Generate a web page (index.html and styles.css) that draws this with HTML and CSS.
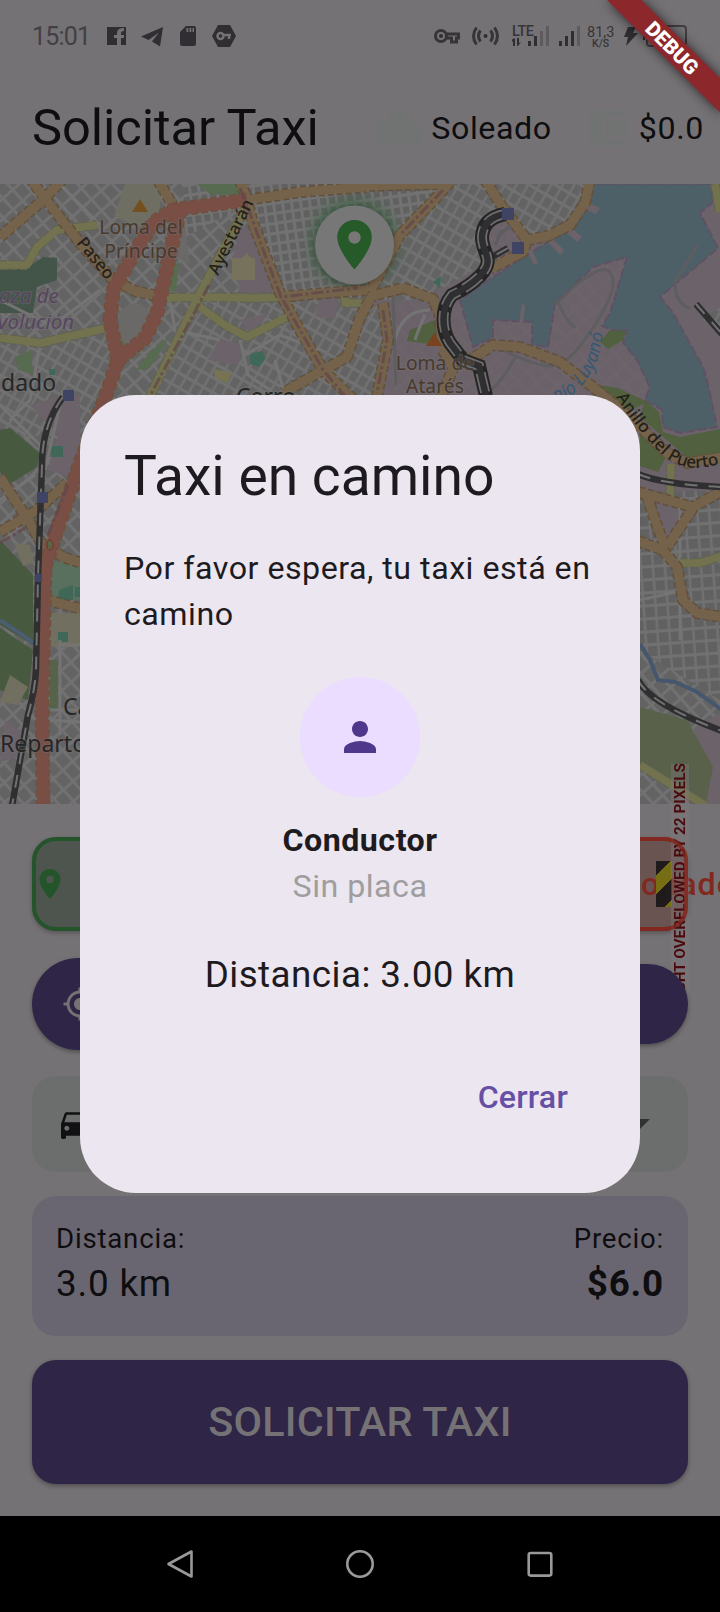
FILE: index.html
```html
<!DOCTYPE html>
<html lang="es">
<head>
<meta charset="utf-8">
<title>Solicitar Taxi</title>
<link rel="stylesheet" href="styles.css">
</head>
<body>
<div class="screen">
  <header class="status">
    <span class="clock">15:01</span>
    <svg class="status-left" width="134" height="28" viewBox="104 22 134 28">
      <path class="ink" d="M107 27h19v18h-5v-7h3v-3h-3v-2q0-2 3-2v-3q-7 0-7 5v2h-3v3h3v7h-10z"/>
      <path class="ink" d="M141 36.500l22-9.500-3 19.500-8-5 7-9-10.500 7.500z"/>
      <path class="ink" fill-rule="evenodd" d="M186 26h8q2 0 2 2v16q0 2-2 2h-12q-2 0-2-2V32zm.5 2v4h1.800v-4zm3 0v4h1.800v-4zm3 0v4h1.500v-4z"/>
      <path class="ink" d="M218 25h12l6 11-6 11h-12l-6-11z"/>
      <g class="key-cut"><circle cx="220.500" cy="36" r="3"/><path d="M223.500 35h7.500M229 35v4"/></g>
    </svg>
    <svg class="status-right" width="260" height="32" viewBox="430 20 260 32">
      <g class="line"><circle cx="441" cy="36" r="5.500"/><path d="M446.500 34H458.500V38H456.500V42H451.500V38H446.500"/></g>
      <circle class="ink" cx="441" cy="36" r="2"/>
      <circle class="ink" cx="485.500" cy="36" r="2"/>
      <g class="line"><path d="M480.500 30.500q-4 5.500 0 11M490.500 30.500q4 5.500 0 11M476.500 27.500q-6 8.500 0 17M494.500 27.500q6 8.500 0 17"/></g>
      <text class="tiny lte" x="512" y="36">LTE</text>
      <path class="ink" d="M515 38v8h-2v-5l-1 1v-2.500zM519 38v5l2-1-3 4h-1v-8zM528 41h3v5h-3zM534 36h3v10h-3z"/>
      <path class="faint" d="M540 31h3v15h-3zM546 26h3v20h-3zM577 26h3v20h-3z"/>
      <path class="ink" d="M559 41h3v5h-3zM565 36h3v10h-3zM571 31h3v15h-3z"/>
      <text class="tiny rate" x="587" y="37">81,3</text>
      <text class="tiny unit" x="592" y="47">K/S</text>
      <path class="ink" d="M628 27h8l-3 6h5l-12 13 2-9h-4z"/>
      <rect class="batt" x="647" y="26" width="39" height="20" rx="3"/>
      <path class="ink" d="M643 32h2v8h-2z"/>
      <text class="tiny rate" x="658" y="42">69</text>
    </svg>
  </header>

  <div class="appbar">
    <h1 class="title">Solicitar Taxi</h1>
    <div class="weather">
      <svg class="pale" width="48" height="48" viewBox="0 0 24 24"><path d="M19.350 10.040A7.490 7.490 0 0 0 12 4C9.110 4 6.600 5.640 5.350 8.040A5.994 5.994 0 0 0 0 14c0 3.310 2.690 6 6 6h13c2.760 0 5-2.240 5-5 0-2.640-2.050-4.780-4.650-4.960z"/></svg>
      <span>Soleado</span>
    </div>
    <div class="wallet">
      <svg class="pale" width="48" height="48" viewBox="0 0 24 24"><path d="M21 18v1c0 1.100-.9 2-2 2H5c-1.110 0-2-.9-2-2V5c0-1.100.89-2 2-2h14c1.100 0 2 .9 2 2v1h-9c-1.110 0-2 .9-2 2v8c0 1.100.89 2 2 2h9zm-9-2h10V8H12v8zm4-2.500c-.83 0-1.500-.67-1.500-1.500s.67-1.500 1.500-1.500 1.500.67 1.500 1.500-.67 1.500-1.500 1.500z"/></svg>
      <span>$0.0</span>
    </div>
  </div>

  <svg class="map" width="720" height="620" viewBox="0 184 720 620">
    <defs>
      <pattern id="blocksA" width="13" height="15" patternUnits="userSpaceOnUse" patternTransform="rotate(-42)"><rect width="13" height="15" fill="#727172"/><rect x="1" y="1" width="10" height="12" fill="#646363"/></pattern>
      <pattern id="blocksB" width="9" height="10" patternUnits="userSpaceOnUse" patternTransform="rotate(-8)"><rect width="9" height="10" fill="#737273"/><rect x="1" y="1" width="6" height="7" fill="#626161"/></pattern>
      <pattern id="blocksC" width="10" height="13" patternUnits="userSpaceOnUse" patternTransform="rotate(30)"><rect width="10" height="13" fill="#727172"/><rect x="1" y="1" width="7.500" height="10" fill="#646363"/></pattern>
      <pattern id="blocksD" width="12" height="13" patternUnits="userSpaceOnUse" patternTransform="rotate(-4)"><rect width="12" height="13" fill="#727172"/><rect x="1" y="1" width="9.500" height="10" fill="#626162"/></pattern>
      <filter id="soft" x="-30%" y="-30%" width="160%" height="160%"><feGaussianBlur stdDeviation="7"/></filter>
      <g id="orange">
        <path d="M30 178L43 196 80 243 113 280 135 291 167 298M0 237L43 200 62 180M158 180L173 206M240 180L247 200 253 223 280 293 301 332 323 370 356 402M247 200L300 192 366 187M280 297L325 293 367 290M323 370L347 357 360 317 372 296 403 288 433 299 439 313 443 347 470 360 493 345 520 347 560 362 593 387 633 420 667 453 687 463 722 457M323 370L283 393"/>
        <path d="M360 186L443 184M450 182L434 200 400 235 387 260 370 292M485 180L503 208 527 240M590 180L585 203 570 225 548 236 527 240 523 252 490 269M383 303L388 340 377 396M443 350L453 368 440 400"/>
        <path d="M0 532L37 510 67 483M0 477L30 523 45 550M50 548L63 557 82 563M46 600L82 609M638 492L693 507 722 491M647 496L655 520 665 547M693 508L667 547M638 541L663 550 677 567 683 600 697 613 722 617"/>
      </g>
      <g id="yellow">
        <path d="M0 265L27 265 37 247 57 230 97 225M0 338L40 343 107 328M160 298L200 297 257 298 282 297M197 305L225 325 247 337 287 317M247 205L200 293 150 396M345 297L345 303 366 303M671 464L670 500M680 563L700 563 722 556M640 765L706 806M715 184L720 212"/>
      </g>
      <g id="red">
        <path d="M247 200L173 210 153 223 133 255 113 290 110 320 118 360 106 395 80 463 57 530 45 567 42 700 43 806M180 210L167 267 157 313 145 338 118 360"/>
      </g>
      <g id="rail">
        <path d="M63 397Q42 425 42 465L38 577 36 670Q35 690 28 715L12 806M508 248L492 257M638 474Q660 484 722 487M638 680Q650 704 722 731M696 304L722 334"/>
      </g>
      <path id="mainline" d="M505 214Q483 218 482 237C482 254 496 259 480 276Q469 287 452 295C440 309 442 330 450 343L463 360 479 366 486 396"/>
      <path id="puerto" d="M616 397Q638 432 662 454T722 463"/>
      <path id="rio" d="M558 405Q594 382 600 350T611 306"/>
    </defs>

    <rect x="0" y="184" width="720" height="620" fill="url(#blocksA)"/>
    <path d="M185 184H440L365 300 280 297 247 205 180 240z" fill="url(#blocksB)"/>
    <path d="M445 184H590L570 230 530 253 480 270 365 296z" fill="url(#blocksC)"/>
    <path d="M205 300H370V400H150zM0 345L108 330 118 365 100 410 60 440 0 430z" fill="url(#blocksC)"/>
    <path d="M600 490H720V700L640 650z" fill="url(#blocksD)"/>
    <path d="M45 640H80V804H45z" fill="url(#blocksA)"/>
    <!-- industrial zones -->
    <g fill="#6c626a">
      <path d="M490 184L470 240 430 300 373 300 383 400H655V184z" opacity=".85"/>
      <path d="M240 225l18 9 17 60-35-1-7-35zM220 338l23 7-5 20-30-5zM320 296h20l-5 23-20-3zM240 320l30-7-20 20zM30 405l28 30-10 35 32 10v-85L65 395zM12 640l25 30-5 20zM5 720l22 15-10 22-17 5zM640 380l80 20V490l-80 3zM655 500l36 10-26 30z"/>
      <path d="M660 184h60V480H640V345z"/>
      <path d="M695 728l25-15v92h-25z"/>
    </g>
    <path d="M480 184H590L570 230 545 236 520 240 503 208z" fill="url(#blocksC)"/>
    <path d="M440 195L482 184 505 215 483 227 490 260 435 293 380 292 400 240z" fill="url(#blocksC)"/>
    <path d="M361 320L383 300 380 395H350zM700 318l20-10v23z" fill="url(#blocksC)"/>
    <!-- parks -->
    <g fill="#47593f">
      <path d="M0 270L27 268 43 257 57 258V280L37 287 33 313H0z" fill="#435548"/>
      <path d="M197 184h43v12l-30-2zM15 357l16-7 2 24-15-4zM110 365l8-27 34 2-22 20zM150 352l20-16-20 32-14 2zM165 270l14-8-3 30-14-4z" fill="#576b50"/>
      <path d="M0 430L10 428 40 453 37 467 5 487 0 470zM0 540L33 575V645L0 625zM0 628L33 650 28 700 0 690z"/>
      <path d="M645 400l14 12 4 20 17 5 40-8v25l-30 6-50-43zM610 330h16l-3 10-15 9-8-7zM640 425l30 25-12 22-18-6zM410 330l25-10 10 22-8 3-30-4zM598 385l20 3 30 14-18 8z" fill="#51603f"/>
      <path d="M640 707L687 720 713 767 706 804 640 765z" fill="#59614b"/>
      <path d="M55 613h25v6H55zM50 660h8v50h-8z" fill="#566348"/>
    </g>
    <path d="M125 184h37l-3 30-20 14-25-12z" fill="#6e6e63"/>
    <path d="M14 543l16 2 4 18-11 3zM10 675l18 12-10 18-18-3zM47 613h33v34H47z" fill="#706f60"/>
    <path d="M50 562h30v38H48z" fill="#59705f"/>
    <g fill="#3f6859"><path d="M51 446h12v11H51zM59 590l14-5v15H58zM58 632h10v10H58zM75 587h5v10h-5zM49 369h6v6h-6zM250 354l12-3 4 7-7 9-9-3zM433 282l8-6-1 12z"/></g>
    <path d="M119 313q14-18 29-4l3 28-18 16-15-18zM185 222l5 43-15-9z" fill="#6a6967"/>
    <path d="M232 258h10l5-5 4 5h4v22h-23z" fill="#77725c"/>
    <path d="M214 369l18 4-5 10-12-5z" fill="#777251"/>
    <!-- park around the pin -->
    <ellipse cx="354" cy="243" rx="44" ry="44" fill="#33613b" opacity=".65" filter="url(#soft)"/>

    <!-- harbour -->
    <path class="water" d="M593 184L587 203 567 230 530 253 493 277 460 300 473 347 493 337 493 320 532 322 532 345 548 347 555 303 593 267 627 257 610 313 602 326 612 330 627 330 623 343 637 360 650 387 645 400 662 410 663 427 680 433 717 427 707 380 703 367 673 313 660 297 718 248 700 213 712 203 713 184z"/>
    <g fill="#6c626a"><path d="M584 201l16 7-4 6-16-7zM568 225l14 12-5 5-13-12zM552 238l12 12-4 5-12-13zM532 249l6 14-4 2-7-14zM519 322l3-18 3 1-2 18z"/></g>
    <path d="M640 644L650 660 658 680 675 682 697 692 722 710" fill="none" stroke="#46566d" stroke-width="4"/>
    <path d="M0 620L36 644" fill="none" stroke="#4b5d70" stroke-width="4"/>

    <!-- minor streets -->
    <g class="street">
      <path d="M0 300L60 330M60 184L100 225M40 345L30 400 10 420M100 290L60 320M170 300L175 330 220 340M240 340L248 375 270 390M245 355L280 335 320 350M275 360L285 395M395 340Q402 310 430 310M415 340Q420 325 425 315M0 405L45 450M60 405L45 470M0 500L35 475M60 640V735M60 645H80M50 710H80M48 720L80 722M680 640V500M640 600L685 590"/>
      <path class="service" d="M393 297L396 385M558 302Q565 320 575 328M556 304Q600 260 610 272T598 320 560 364 493 345M698 245L676 280Q672 300 690 309M492 390Q510 370 516 355M502 230L495 245M515 222L497 237"/>
    </g>

    <use href="#yellow" class="case-y"/><use href="#yellow" class="fill-y"/>
    <use href="#orange" class="case-o"/><use href="#orange" class="fill-o"/>
    <use href="#red" class="case-r"/><use href="#red" class="fill-r"/>
    <ellipse cx="50" cy="545" rx="3" ry="5" fill="#596444" stroke="#75352b"/>
    <path class="boundary" d="M240 188L247 205 265 255 281 297 358 288M283 300L323 370 350 402M209 285L150 396M443 190L402 233M383 310L387 340 377 393M68 485L48 535M0 543L25 528"/>
    <use href="#rail" class="rail-dark"/><use href="#rail" class="rail-light"/>
    <use href="#mainline" class="main-dark"/><use href="#mainline" class="main-mid"/><use href="#mainline" class="main-core"/>
    <g fill="#3f4465"><path d="M63 390h11v11H63zM37 492h11v11H37zM35 574h7v8h-7zM502 208h12v12h-12zM512 242h12v12h-12z"/></g>
    <path fill="#74501f" d="M140 199l8 13h-16z"/><path fill="#7b421f" d="M434 333l8 13h-16z"/>

    <g class="map-text">
      <g class="peak"><text x="141" y="234">Loma del</text><text x="141" y="258">Príncipe</text><text x="435" y="370">Loma de</text><text x="435" y="393">Atarés</text></g>
      <text class="road-name" transform="translate(76 243) rotate(51)">Paseo</text>
      <text class="road-name" transform="translate(218 276) rotate(-64)">Ayestarán</text>
      <g class="district"><text x="-1" y="303">aza de</text><text x="-12" y="329">evolución</text></g>
      <g class="town"><text x="1" y="391">dado</text><text x="236" y="405">Cerro</text><text x="63" y="715">Calvario</text><text x="0" y="752">Reparto</text></g>
      <text class="road-name"><textPath href="#puerto">Anillo del Puerto</textPath></text>
      <text class="river"><textPath href="#rio">Río Luyanó</textPath></text>
    </g>

    <g class="pin-badge">
      <circle cx="354.500" cy="245" r="39.500" fill="#777"/>
      <path fill="#265a29" fill-rule="evenodd" d="M354.500 220a17 17 0 0 0-17.300 17.300c0 13 17.300 32.200 17.300 32.200s17.300-19.200 17.300-32.200A17 17 0 0 0 354.500 220zm0 11.300a6.200 6.200 0 1 1 0 12.400 6.200 6.200 0 0 1 0-12.400z"/>
    </g>
  </svg>

  <main class="form">
    <div class="row">
      <div class="field from">
        <svg width="36" height="36" viewBox="0 0 24 24"><path fill="currentColor" d="M12 2C8.130 2 5 5.130 5 9c0 5.250 7 13 7 13s7-7.750 7-13c0-3.870-3.130-7-7-7zm0 9.500a2.500 2.500 0 0 1 0-5 2.500 2.500 0 0 1 0 5z"/></svg>
      </div>
      <div class="field to">
        <span class="to-text">onado</span>
        <i class="hazard"></i>
        <span class="overflow-note">RIGHT OVERFLOWED BY 22 PIXELS</span>
      </div>
    </div>
    <div class="row pills">
      <div class="pill big">
        <svg width="36" height="36" viewBox="0 0 24 24"><path fill="currentColor" d="M12 8c-2.210 0-4 1.790-4 4s1.790 4 4 4 4-1.790 4-4-1.790-4-4-4zm8.940 3A8.994 8.994 0 0 0 13 3.060V1h-2v2.060A8.994 8.994 0 0 0 3.060 11H1v2h2.060A8.994 8.994 0 0 0 11 20.940V23h2v-2.060A8.994 8.994 0 0 0 20.940 13H23v-2h-2.060zM12 19c-3.870 0-7-3.130-7-7s3.130-7 7-7 7 3.130 7 7-3.130 7-7 7z"/></svg>
      </div>
      <div class="pill"></div>
    </div>
    <div class="select">
      <svg width="40" height="40" viewBox="0 0 24 24"><path fill="#111012" d="M18.920 6.010C18.720 5.420 18.160 5 17.500 5h-11c-.66 0-1.210.42-1.420 1.010L3 12v8c0 .55.45 1 1 1h1c.55 0 1-.45 1-1v-1h12v1c0 .55.45 1 1 1h1c.55 0 1-.45 1-1v-8l-2.080-5.990zM6.500 16c-.83 0-1.500-.67-1.500-1.500S5.670 13 6.500 13s1.500.67 1.500 1.500S7.330 16 6.500 16zm11 0c-.83 0-1.500-.67-1.500-1.500s.67-1.500 1.500-1.500 1.500.67 1.500 1.500-.67 1.500-1.500 1.500zM5 11l1.500-4.500h11L19 11H5z"/></svg>
      <svg width="20" height="10" viewBox="0 0 20 10"><path fill="#303131" d="M0 0h20L10 10z"/></svg>
    </div>
    <section class="summary">
      <div><div class="label">Distancia:</div><div class="value">3.0 km</div></div>
      <div class="end"><div class="label">Precio:</div><div class="value strong">$6.0</div></div>
    </section>
    <button class="submit">SOLICITAR TAXI</button>
  </main>

  <nav class="navbar">
    <svg width="30" height="30" viewBox="0 0 30 30"><path d="M26.500 2.500v25L3.500 15z"/></svg>
    <svg width="30" height="30" viewBox="0 0 30 30"><circle cx="15" cy="15" r="12.700"/></svg>
    <svg width="30" height="30" viewBox="0 0 30 30"><rect x="3.700" y="4" width="22.600" height="22.600" rx="2"/></svg>
  </nav>

  <div class="overlay">
    <section class="dialog" role="dialog">
      <h2 class="dialog-title">Taxi en camino</h2>
      <p class="dialog-text">Por favor espera, tu taxi está en camino</p>
      <div class="avatar"><svg width="48" height="48" viewBox="0 0 24 24"><path fill="#4f378b" d="M12 12c2.210 0 4-1.790 4-4s-1.790-4-4-4-4 1.790-4 4 1.790 4 4 4zm0 2c-2.670 0-8 1.340-8 4v2h16v-2c0-2.660-5.330-4-8-4z"/></svg></div>
      <div class="driver">Conductor</div>
      <div class="plate">Sin placa</div>
      <div class="distance">Distancia: 3.00 km</div>
      <button class="close">Cerrar</button>
    </section>
  </div>

  <svg class="debug" width="140" height="140" viewBox="580 0 140 140">
    <path class="debug-band" d="M607 0h34.500L722 80v34.500z"/>
    <text x="672" y="55" transform="rotate(45 672 48)">DEBUG</text>
  </svg>
</div>
</body>
</html>
```

FILE: styles.css
```css
* { box-sizing: border-box; }
body { margin: 0; font-family: Roboto, "Liberation Sans", sans-serif; background: #757275; color: #0e0d0f; }
h1, h2, p { margin: 0; font-weight: 400; }
button { border: 0; font-family: inherit; }
.screen { position: relative; width: 720px; height: 1612px; overflow: hidden; display: flex; flex-direction: column; }

.status { height: 72px; display: flex; align-items: center; padding: 0 30px 0 32px; }
.clock { font-size: 25px; line-height: 30px; color: #424044; letter-spacing: -.8px; width: 72px; padding-top: 2px; }
.status-right { margin-left: auto; }
.ink { fill: #302e32; }
.faint { fill: #5d5b5e; }
.line { fill: none; stroke: #363438; stroke-width: 3; }
.key-cut { fill: none; stroke: #757275; stroke-width: 2.500; }
.batt { fill: none; stroke: #403e42; stroke-width: 2; }
.tiny { fill: #363438; font-weight: 500; }
.lte { font-size: 14.500px; letter-spacing: -.6px; }
.rate { font-size: 14.500px; font-weight: 400; }
.unit { font-size: 10.500px; }

.appbar { height: 112px; display: flex; align-items: center; padding: 0 16px 0 32px; font-size: 32.200px; letter-spacing: .6px; }
.title { font-size: 50.600px; letter-spacing: -.05px; line-height: 64px; flex: 1; }
.weather, .wallet { display: flex; align-items: center; gap: 8px; }
.weather { margin-right: 31px; }
.pale { fill: #707371; }

.map { display: block; flex: none; }
.water { fill: #4e6067; stroke: #5f5164; stroke-width: 2; stroke-dasharray: 9 3; }
.street { fill: none; stroke: #757475; stroke-width: 3; }
.service { stroke: #5e5d5f; stroke-width: 3; }
.case-y, .case-o, .case-r, .fill-y, .fill-o, .fill-r { fill: none; stroke-linejoin: round; }
.case-y { stroke: #5f6350; stroke-width: 10; stroke-dasharray: 7 3; }
.fill-y { stroke: #73724f; stroke-width: 7.500; }
.case-o { stroke: #62503a; stroke-width: 12; stroke-dasharray: 6 3; }
.fill-o { stroke: #75624a; stroke-width: 9; }
.case-r { stroke: #71503d; stroke-width: 15; stroke-dasharray: 7 3; }
.fill-r { stroke: #784e45; stroke-width: 12; }
.boundary { fill: none; stroke: #62474b; stroke-width: 3; stroke-dasharray: 12 3 3 3; opacity: .75; }
.rail-dark { fill: none; stroke: #2f2f31; stroke-width: 6.500; }
.rail-light { fill: none; stroke: #727273; stroke-width: 2; stroke-dasharray: 13 11; }
.main-dark { fill: none; stroke: #252526; stroke-width: 14; }
.main-mid { fill: none; stroke: #6d6d6e; stroke-width: 10; stroke-dasharray: 20 6; }
.main-core { fill: none; stroke: #2f2f31; stroke-width: 6.500; }
.map-text { font-family: "Noto Sans", sans-serif; paint-order: stroke; stroke: #74737366; stroke-width: 2.500px; stroke-linejoin: round; }
.peak { font-size: 19.300px; fill: #49392e; text-anchor: middle; }
.road-name { font-size: 17px; fill: #242019; stroke: none; font-weight: 500; }
.district { font-size: 20.500px; font-style: italic; fill: #574560; }
.town { font-size: 23px; fill: #262626; }
.river { font-size: 18px; font-style: italic; fill: #365874; stroke: none; }
.pin-badge { filter: drop-shadow(0 2px 3px #0004); }

.form { height: 712px; padding: 33px 32px 32px; display: flex; flex-direction: column; }
.row { display: flex; gap: 16px; }
.field { position: relative; flex: 1; height: 94px; border: 4px solid; border-radius: 24px; display: flex; align-items: center; box-shadow: 0 2px 4px #0004; }
.from { color: #24552a; background: #4d554e; }
.from svg { margin-left: -4px; }
.to { border-color: #812820; background: #6a5451; color: #812820; }
.to-text { position: absolute; left: 269px; top: 24px; font-size: 32.200px; line-height: 38px; font-weight: 500; letter-spacing: 1px; z-index: 1; }
.hazard { position: absolute; left: 284px; top: 20px; width: 16px; height: 46px; background: linear-gradient(135deg, #1b1718 0 10.600px, #777011 10.600px 24px, #1b1718 24px 38.500px, #777011 38.500px); z-index: 2; opacity: .94; }
.overflow-note { position: absolute; left: 299px; bottom: -80px; height: 243px; width: 18px; writing-mode: vertical-rl; transform: rotate(180deg); white-space: nowrap; background: #7d7a7c66; color: #4b0b0e; font-size: 15.300px; font-weight: 700; line-height: 18px; text-align: right; z-index: 2; }
.to::after { content: ""; position: absolute; inset: -4px; border: 4px solid #812820; border-radius: 24px; z-index: 3; opacity: .75; }
.pills { margin-top: 27px; align-items: center; position: relative; z-index: 4; }
.pill { flex: 1; height: 80px; border-radius: 46px; background: #2f2546; box-shadow: 0 2px 4px #0005; display: flex; align-items: center; }
.big { height: 92px; padding-left: 30px; color: #757275; }
.select { margin-top: 26px; height: 96px; flex: none; border-radius: 24px; background: #6c6e6d; display: flex; align-items: center; justify-content: space-between; padding: 0 38px 0 24px; }
.summary { margin-top: 24px; height: 140px; flex: none; border-radius: 24px; background: #6a6671; padding: 23px 24px; display: flex; justify-content: space-between; }
.label { font-size: 27.600px; line-height: 40px; letter-spacing: .8px; }
.value { font-size: 36.800px; line-height: 50px; letter-spacing: .8px; }
.end { text-align: right; }
.strong { font-weight: 700; }
.submit { margin-top: 24px; height: 124px; flex: none; border-radius: 24px; background: #2f2546; color: #757275; font-size: 41.400px; font-weight: 500; letter-spacing: .2px; box-shadow: 0 2px 5px #0005; }

.navbar { height: 96px; flex: none; background: #000; display: flex; justify-content: space-between; align-items: center; padding: 0 165px; fill: none; stroke: #999; stroke-width: 2.600; stroke-linejoin: round; }

.overlay { position: absolute; inset: 0; z-index: 5; display: flex; justify-content: center; align-items: flex-start; padding-top: 395px; }
.dialog { width: 560px; height: 798px; border-radius: 56px; background: #ece6f0; color: #1d1b20; padding: 48px 44px; display: flex; flex-direction: column; align-items: center; }
.dialog-title { align-self: stretch; font-size: 55.200px; line-height: 66px; }
.dialog-text { align-self: stretch; margin-top: 36px; font-size: 32.200px; line-height: 46px; letter-spacing: .5px; }
.avatar { margin-top: 40px; width: 120px; height: 120px; flex: none; border-radius: 50%; background: #eaddff; display: flex; align-items: center; justify-content: center; }
.driver { margin-top: 20px; font-size: 32.200px; line-height: 46px; font-weight: 700; letter-spacing: .5px; }
.plate { font-size: 32.200px; line-height: 46px; letter-spacing: .5px; color: #9e9e9e; }
.distance { margin-top: 39px; font-size: 36.800px; line-height: 54px; letter-spacing: .45px; }
.close { align-self: flex-end; margin: 72px 4px 0 0; padding: 0 24px; background: none; color: #6750a4; font-size: 32.200px; line-height: 46px; font-weight: 500; letter-spacing: .2px; }

.debug { position: absolute; right: 0; top: 0; z-index: 6; }
.debug-band { fill: #8c282c; filter: drop-shadow(0 0 6px #000a); }
.debug text { fill: #fff; font-size: 20.400px; font-weight: 900; text-anchor: middle; }
```
